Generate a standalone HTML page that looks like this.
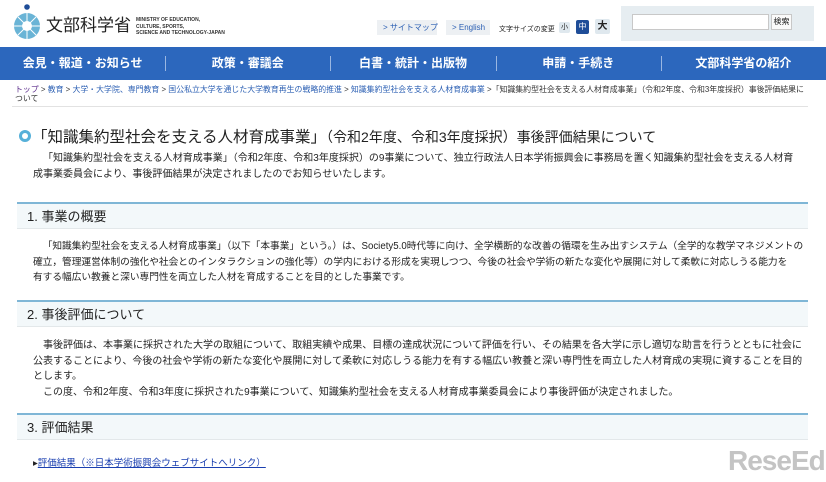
<!DOCTYPE html>
<html><head><meta charset="utf-8"><style>
*{margin:0;padding:0;box-sizing:border-box}
body{width:826px;height:482px;overflow:hidden;background:#fff;font-family:"Liberation Sans","Noto Sans CJK JP",sans-serif;color:#222;position:relative}
.a{position:absolute;white-space:nowrap}
.nav{position:absolute;left:0;top:47px;width:826px;height:33px;background:#2c67bd;display:flex}
.nav div{flex:1;color:#fff;font-size:12px;font-weight:bold;text-align:center;line-height:33px;position:relative}
.nav div+div:before{content:"";position:absolute;left:0;top:9px;height:15px;border-left:1px solid #9ab7e2}
.sec{position:absolute;left:17px;width:791px;height:27px;background:#f3f8fa;border-top:2px solid #7fb6d6;border-bottom:1px solid #e3e8ea;font-size:13px;line-height:25px;padding-left:10px;color:#222}
.p{position:absolute;left:33px;font-size:10px;line-height:15.5px;white-space:nowrap;color:#222}
</style></head><body>
<svg class="a" style="left:11px;top:3px" width="32" height="38" viewBox="0 0 32 38"><circle cx="16" cy="4" r="2.8" fill="#1f4d98"/><circle cx="16" cy="23" r="13" fill="#6ab4d6"/><circle cx="16" cy="23" r="5" fill="#fff"/><g stroke="#fff" stroke-width="1"><line x1="16" y1="10" x2="16" y2="36"/><line x1="3" y1="23" x2="29" y2="23"/><line x1="7" y1="14" x2="25" y2="32"/><line x1="25" y1="14" x2="7" y2="32"/></g></svg>
<div class="a" style="left:46px;top:11px;font-size:17px;letter-spacing:0px;color:#222">文部科学省</div>
<div class="a" style="left:136px;top:17px;font-size:5px;line-height:6.5px;color:#333;font-weight:bold">MINISTRY OF EDUCATION,<br>CULTURE, SPORTS,<br>SCIENCE AND TECHNOLOGY-JAPAN</div>
<div class="a" style="left:377px;top:20px;width:60px;height:15px;background:#edf0f3;font-size:8px;line-height:15px;color:#2b5fb3;padding-left:6px">&gt; サイトマップ</div>
<div class="a" style="left:446px;top:20px;width:44px;height:15px;background:#edf0f3;font-size:8px;line-height:15px;color:#2b5fb3;padding-left:6px">&gt; English</div>
<div class="a" style="left:499px;top:24px;font-size:7px;color:#222">文字サイズの変更</div>
<div class="a" style="left:559px;top:22px;width:11px;height:11px;background:#dfe8ee;font-size:7px;text-align:center;line-height:11px;border-radius:2px">小</div>
<div class="a" style="left:576px;top:20px;width:13px;height:14px;background:#1f4d98;color:#fff;font-size:8px;text-align:center;line-height:14px;border-radius:2px">中</div>
<div class="a" style="left:595px;top:19px;width:15px;height:15px;background:#dfe8ee;font-size:10px;font-weight:bold;text-align:center;line-height:15px;border-radius:2px">大</div>
<div class="a" style="left:621px;top:6px;width:193px;height:35px;background:#e6edf1"></div>
<div class="a" style="left:632px;top:14px;width:137px;height:16px;background:#fff;border:1px solid #c8c8c8"></div>
<div class="a" style="left:771px;top:14px;width:21px;height:16px;background:#fafafa;border:1px solid #c8c8c8;font-size:8px;text-align:center;line-height:14px">検索</div>
<div class="nav"><div>会見・報道・お知らせ</div><div>政策・審議会</div><div>白書・統計・出版物</div><div>申請・手続き</div><div>文部科学省の紹介</div></div>
<div class="a" style="left:15px;top:85px;font-size:7.9px;line-height:9px;color:#333"><span style="color:#5b2c8a">トップ</span> &gt; <span style="color:#2b5fb3">教育</span> &gt; <span style="color:#2b5fb3">大学・大学院、専門教育</span> &gt; <span style="color:#2b5fb3">国公私立大学を通じた大学教育再生の戦略的推進</span> &gt; <span style="color:#2b5fb3">知識集約型社会を支える人材育成事業</span> &gt;「知識集約型社会を支える人材育成事業」（令和2年度、令和3年度採択）事後評価結果に<br>ついて</div>
<div class="a" style="left:12px;top:106px;width:796px;border-top:1px solid #e2e2e2"></div>
<div class="a" style="left:19px;top:130px;width:12px;height:12px;border-radius:50%;background:#56b0d9"></div>
<div class="a" style="left:22px;top:133px;width:6px;height:6px;border-radius:50%;background:#fff"></div>
<div class="a" style="left:32px;top:125px;font-size:15.5px;color:#222">「知識集約型社会を支える人材育成事業」<span style="font-size:14px">（令和2年度、令和3年度採択）事後評価結果について</span></div>
<div class="p" style="top:151px">&emsp;「知識集約型社会を支える人材育成事業」（令和2年度、令和3年度採択）の9事業について、独立行政法人日本学術振興会に事務局を置く知識集約型社会を支える人材育<br>成事業委員会により、事後評価結果が決定されましたのでお知らせいたします。</div>
<div class="sec" style="top:202px">1. 事業の概要</div>
<div class="p" style="top:239px;font-size:9.7px">&emsp;「知識集約型社会を支える人材育成事業」（以下「本事業」という。）は、Society5.0時代等に向け、全学横断的な改善の循環を生み出すシステム（全学的な教学マネジメントの<br>確立，管理運営体制の強化や社会とのインタラクションの強化等）の学内における形成を実現しつつ、今後の社会や学術の新たな変化や展開に対して柔軟に対応しうる能力を<br>有する幅広い教養と深い専門性を両立した人材を育成することを目的とした事業です。</div>
<div class="sec" style="top:300px">2. 事後評価について</div>
<div class="p" style="top:338px">&emsp;事後評価は、本事業に採択された大学の取組について、取組実績や成果、目標の達成状況について評価を行い、その結果を各大学に示し適切な助言を行うとともに社会に<br>公表することにより、今後の社会や学術の新たな変化や展開に対して柔軟に対応しうる能力を有する幅広い教養と深い専門性を両立した人材育成の実現に資することを目的<br>とします。<br>&emsp;この度、令和2年度、令和3年度に採択された9事業について、知識集約型社会を支える人材育成事業委員会により事後評価が決定されました。</div>
<div class="sec" style="top:413px">3. 評価結果</div>
<div class="a" style="left:33px;top:455px;font-size:9.5px;color:#222">▸<span style="color:#1a3fb0;text-decoration:underline">評価結果（※日本学術振興会ウェブサイトへリンク）</span></div>
<div class="a" style="left:728px;top:445px;font-size:28px;font-weight:bold;color:#c4c4c4;letter-spacing:-1px">ReseEd</div>
</body></html>
